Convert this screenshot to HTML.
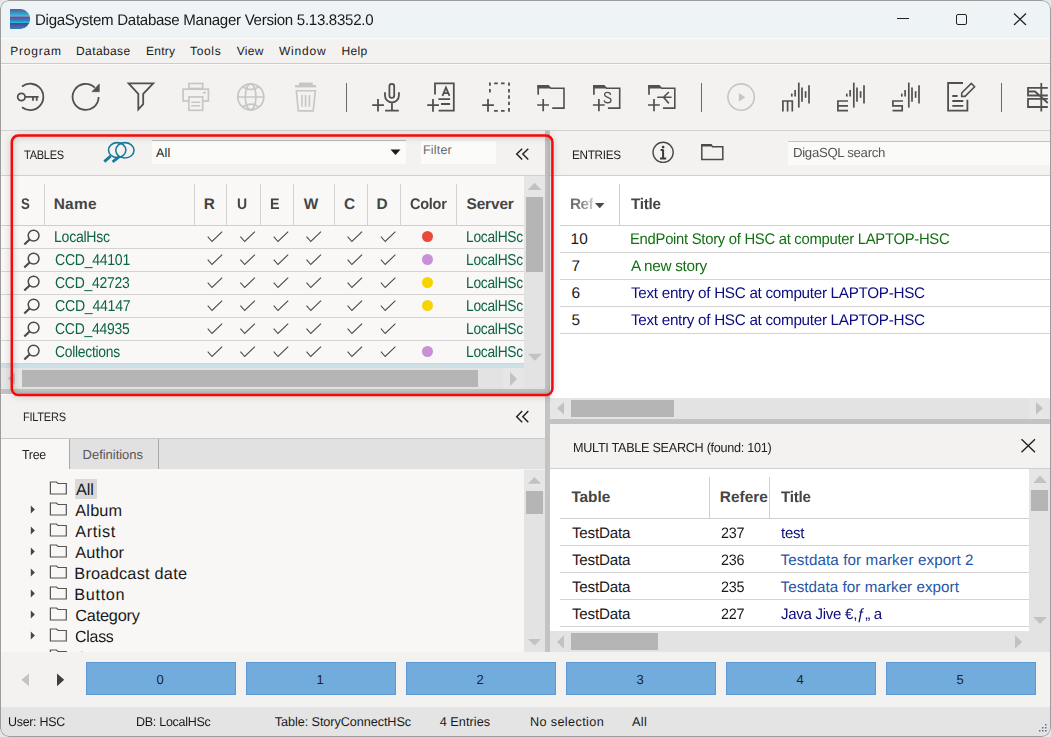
<!DOCTYPE html>
<html><head><meta charset="utf-8"><style>
html,body{margin:0;padding:0;}
body{width:1051px;height:737px;overflow:hidden;position:relative;background:#e4e6e8;font-family:"Liberation Sans", sans-serif;text-rendering:geometricPrecision;}
#win{position:absolute;left:0;top:0;width:1051px;height:737px;overflow:hidden;background:#f3f2f0;border-radius:9px;}
</style></head><body><div id="win">
<div style="position:absolute;left:0px;top:0px;width:1051px;height:38px;background:#eef3f6;"></div>
<div style="position:absolute;left:0px;top:38px;width:1051px;height:1px;background:#fbfbfa;"></div>
<svg style="position:absolute;left:10px;top:9px;" width="20" height="20" viewBox="10 9 20 20"><defs>
<linearGradient id="lb1" x1="0" y1="0" x2="0" y2="1"><stop offset="0" stop-color="#5a5a9c"/><stop offset="0.55" stop-color="#3c92c2"/><stop offset="1" stop-color="#1fd0e2"/></linearGradient>
<linearGradient id="lb2" x1="0" y1="0" x2="0" y2="1"><stop offset="0" stop-color="#5a4a96"/><stop offset="0.6" stop-color="#3880bc"/><stop offset="1" stop-color="#1ec8de"/></linearGradient>
<linearGradient id="lb3" x1="0" y1="0" x2="0" y2="1"><stop offset="0" stop-color="#5a3e8e"/><stop offset="1" stop-color="#2a86c2"/></linearGradient>
<clipPath id="dclip"><path d="M10,9 H20.5 A9.6,10 0 0 1 20.5,29 H10 Z"/></clipPath></defs>
<g clip-path="url(#dclip)"><rect x="10" y="9" width="20" height="7.4" fill="url(#lb1)"/><rect x="10" y="16.4" width="20" height="6.6" fill="url(#lb2)"/><rect x="10" y="23" width="20" height="6" fill="url(#lb3)"/></g></svg>
<div id="t_title" style="position:absolute;left:35.00px;top:12.86px;font-size:15.4px;line-height:15.4px;color:#1a1a1a;font-weight:normal;letter-spacing:-0.300px;white-space:nowrap;transform:scaleX(0.9797);transform-origin:0 0;">DigaSystem Database Manager Version 5.13.8352.0</div>
<div style="position:absolute;left:897px;top:18px;width:12px;height:1.2px;background:#222;"></div>
<div style="position:absolute;left:955.5px;top:13.5px;width:11px;height:11px;background:transparent;border:1.3px solid #222;border-radius:2px;box-sizing:border-box;"></div>
<svg style="position:absolute;left:1012px;top:12px;" width="16" height="16" viewBox="1012 12 16 16"><path d="M1014,13.5 L1026,25 M1026,13.5 L1014,25" stroke="#222" stroke-width="1.3"/></svg>
<div id="m_0" style="position:absolute;left:10.30px;top:45.43px;font-size:12px;line-height:12px;color:#1a1a1a;font-weight:normal;letter-spacing:0.764px;white-space:nowrap;">Program</div>
<div id="m_1" style="position:absolute;left:76.00px;top:45.43px;font-size:12px;line-height:12px;color:#1a1a1a;font-weight:normal;letter-spacing:0.401px;white-space:nowrap;">Database</div>
<div id="m_2" style="position:absolute;left:146.00px;top:45.43px;font-size:12px;line-height:12px;color:#1a1a1a;font-weight:normal;letter-spacing:0.248px;white-space:nowrap;">Entry</div>
<div id="m_3" style="position:absolute;left:190.00px;top:45.43px;font-size:12px;line-height:12px;color:#1a1a1a;font-weight:normal;letter-spacing:0.672px;white-space:nowrap;">Tools</div>
<div id="m_4" style="position:absolute;left:236.70px;top:45.43px;font-size:12px;line-height:12px;color:#1a1a1a;font-weight:normal;letter-spacing:0.291px;white-space:nowrap;">View</div>
<div id="m_5" style="position:absolute;left:279.00px;top:45.43px;font-size:12px;line-height:12px;color:#1a1a1a;font-weight:normal;letter-spacing:0.797px;white-space:nowrap;">Window</div>
<div id="m_6" style="position:absolute;left:341.40px;top:45.43px;font-size:12px;line-height:12px;color:#1a1a1a;font-weight:normal;letter-spacing:0.331px;white-space:nowrap;">Help</div>
<div style="position:absolute;left:0px;top:63px;width:1051px;height:1px;background:#cbcbcb;"></div>
<div style="position:absolute;left:0px;top:64px;width:1051px;height:1px;background:#fbfbfa;"></div>
<svg style="position:absolute;left:14px;top:78px;" width="34" height="36" viewBox="14 78 34 36"><path d="M22,86.5 A13.2,13.2 0 1 1 22,107.3" stroke="#505050" stroke-width="1.8" fill="none"/>
<circle cx="21.4" cy="97" r="3.7" stroke="#505050" stroke-width="1.8" fill="none"/><path d="M25.1,96.9 H38.6 M33,96.9 V100.7 M36.7,96.9 V100.7" stroke="#505050" stroke-width="1.8" fill="none"/></svg>
<svg style="position:absolute;left:68px;top:78px;" width="36" height="36" viewBox="68 78 36 36"><path d="M94.8,87.7 A13,13 0 1 0 98.6,96.9" stroke="#505050" stroke-width="1.8" fill="none"/>
<path d="M91.9,91.7 L99.3,83.9 L99.3,91.7 Z" fill="#505050" stroke="#505050" stroke-width="0.6"/></svg>
<svg style="position:absolute;left:124px;top:78px;" width="34" height="36" viewBox="124 78 34 36"><path d="M128.6,83.4 H153.2 L143.2,93.8 V104.2 L138.3,109.5 V93.8 Z" stroke="#505050" stroke-width="1.8" fill="none" stroke-linejoin="miter"/></svg>
<svg style="position:absolute;left:178px;top:78px;" width="36" height="36" viewBox="178 78 36 36"><rect x="188.9" y="83.5" width="13.8" height="5" stroke="#c6c6c6" stroke-width="1.7" fill="none"/>
<rect x="183.1" y="89.2" width="25.3" height="11.8" stroke="#c6c6c6" stroke-width="1.7" fill="none"/>
<rect x="188.9" y="96.9" width="13.8" height="13.4" fill="#f3f2f0" stroke="#c6c6c6" stroke-width="1.7" fill="none"/>
<path d="M191.2,102.2 H200.2 M191.2,105.8 H200.2 M202.7,92.6 H206" stroke="#c6c6c6" stroke-width="1.6" fill="none"/></svg>
<svg style="position:absolute;left:233px;top:78px;" width="36" height="36" viewBox="233 78 36 36"><circle cx="250.8" cy="96.9" r="13" stroke="#c6c6c6" stroke-width="1.7" fill="none"/><ellipse cx="250.6" cy="96.9" rx="5.3" ry="13" stroke="#c6c6c6" stroke-width="1.7" fill="none"/>
<path d="M237.8,97 H263.8 M242.5,86.8 Q250.6,92.2 258.6,86.8 M242.5,106.9 Q250.6,101.4 258.6,106.9" stroke="#c6c6c6" stroke-width="1.7" fill="none"/></svg>
<svg style="position:absolute;left:291px;top:78px;" width="30" height="36" viewBox="291 78 30 36"><rect x="299" y="82.6" width="13.7" height="3" fill="#c6c6c6"/><rect x="295" y="85.1" width="21.1" height="2.3" fill="#c6c6c6"/>
<path d="M296.3,90.8 H315.4 L313.2,110.9 H298.3 Z" stroke="#c6c6c6" stroke-width="1.6" fill="none"/><path d="M302,95 V106.8 M305.6,95 V106.8 M309.4,95 V106.8" stroke="#c6c6c6" stroke-width="1.6" fill="none"/></svg>
<div style="position:absolute;left:346px;top:83px;width:1.3px;height:28.5px;background:#6a6a6a;"></div>
<div style="position:absolute;left:701px;top:83px;width:1.3px;height:28.5px;background:#6a6a6a;"></div>
<div style="position:absolute;left:1001px;top:83px;width:1.3px;height:28.5px;background:#6a6a6a;"></div>
<svg style="position:absolute;left:368px;top:78px;" width="36" height="36" viewBox="368 78 36 36"><path d="M372.2,105.1 H383.9 M378,99 V111.5" stroke="#505050" stroke-width="1.8" fill="none"/>
<rect x="389.4" y="83.8" width="4.8" height="14.1" rx="2.4" stroke="#505050" stroke-width="1.8" fill="none"/>
<path d="M385,92.2 V95.5 A6.95,7 0 0 0 398.9,95.5 V92.2 M391.95,102.5 V110.5 M385.1,110.7 H398.8" stroke="#505050" stroke-width="1.8" fill="none"/></svg>
<svg style="position:absolute;left:423px;top:78px;" width="36" height="36" viewBox="423 78 36 36"><path d="M435,94.6 V83.3 H453.8 V110.7 H438.6" stroke="#505050" stroke-width="1.8" fill="none"/>
<path d="M427.2,105.1 H438.9 M433,99 V111.7" stroke="#505050" stroke-width="1.8" fill="none"/>
<path d="M438.4,99.2 H450.1 M441,104 H450.1" stroke="#505050" stroke-width="1.8" fill="none"/>
<path d="M442.5,95.9 L445.95,87.6 L449.5,95.9 M443.8,93 H448.2" stroke="#505050" stroke-width="1.75" fill="none"/></svg>
<svg style="position:absolute;left:478px;top:78px;" width="36" height="36" viewBox="478 78 36 36"><path d="M482.2,105.1 H493.9 M488,99 V111.7" stroke="#505050" stroke-width="1.8" fill="none"/>
<path d="M489.9,82.4 V85.8 M489.9,89 V92.4 M494.1,83.3 H497.8 M501,83.3 H504.6 M509,82.4 V85.8 M509,89 V92.4 M509,95.3 V98.8 M509,101.7 V105.1 M509,108 V111.7 M494.1,110.8 H497.8 M501,110.8 H504.6" stroke="#505050" stroke-width="1.8" fill="none"/></svg>
<svg style="position:absolute;left:533px;top:78px;" width="36" height="36" viewBox="533 78 36 36"><path d="M538.2,94.7 V85.5" stroke="#505050" stroke-width="1.7" fill="none"/>
<path d="M537.4000000000001,85 H548.7 L551.8000000000001,88.6 H537.4000000000001 Z" fill="#505050"/>
<path d="M550.2,88.3 H564.0 V108.1 H552.2" stroke="#505050" stroke-width="1.6" fill="none"/>
<path d="M537.2,105 H549.0 M543.2,99 V111.3" stroke="#505050" stroke-width="1.7" fill="none"/></svg>
<svg style="position:absolute;left:588px;top:78px;" width="36" height="36" viewBox="588 78 36 36"><path d="M593.9,94.7 V85.5" stroke="#505050" stroke-width="1.7" fill="none"/>
<path d="M593.1,85 H604.4 L607.5,88.6 H593.1 Z" fill="#505050"/>
<path d="M605.9,88.3 H619.6999999999999 V108.1 H607.9" stroke="#505050" stroke-width="1.6" fill="none"/>
<path d="M592.9,105 H604.6999999999999 M598.9,99 V111.3" stroke="#505050" stroke-width="1.7" fill="none"/><path d="M610.6,94.8 C610.2,91.6 604.6,91.4 604.6,94.6 C604.6,98.2 611,96.6 611,100.2 C611,103.6 604.6,103.6 604.1,100.3" stroke="#505050" stroke-width="1.3" fill="none"/></svg>
<svg style="position:absolute;left:644px;top:78px;" width="36" height="36" viewBox="644 78 36 36"><path d="M649,94.7 V85.5" stroke="#505050" stroke-width="1.7" fill="none"/>
<path d="M648.2,85 H659.5 L662.6,88.6 H648.2 Z" fill="#505050"/>
<path d="M661,88.3 H674.8 V108.1 H663" stroke="#505050" stroke-width="1.6" fill="none"/>
<path d="M648,105 H659.8 M654,99 V111.3" stroke="#505050" stroke-width="1.7" fill="none"/><path d="M657.2,97.3 H671.6 M668.9,92 L663.5,97.3 L668.9,103.4" stroke="#505050" stroke-width="1.6" fill="none"/></svg>
<svg style="position:absolute;left:723px;top:78px;" width="36" height="36" viewBox="723 78 36 36"><circle cx="741.1" cy="97.05" r="13.2" stroke="#c6c6c6" stroke-width="1.6" fill="none"/><path d="M738.9,92.9 V101.7 L745.3,97.3 Z" fill="#c6c6c6"/></svg>
<svg style="position:absolute;left:778px;top:78px;" width="36" height="36" viewBox="778 78 36 36"><path d="M791.8,93.6 V96.6" stroke="#505050" stroke-width="1.7" fill="none"/><path d="M795.1,90 V96.6" stroke="#505050" stroke-width="1.7" fill="none"/><path d="M798.8,82.6 V107.6" stroke="#505050" stroke-width="1.7" fill="none"/><path d="M802,87.5 V101.7" stroke="#505050" stroke-width="1.7" fill="none"/><path d="M805.6,91.2 V97.8" stroke="#505050" stroke-width="1.7" fill="none"/><path d="M809,85.2 V103.6" stroke="#505050" stroke-width="1.7" fill="none"/><path d="M782.9,111.5 V101 H792.3 V111.5 M787.6,101 V111.5" stroke="#505050" stroke-width="1.7" fill="none"/></svg>
<svg style="position:absolute;left:833px;top:78px;" width="36" height="36" viewBox="833 78 36 36"><path d="M846.8,93.6 V96.6" stroke="#505050" stroke-width="1.7" fill="none"/><path d="M850.1,90 V96.6" stroke="#505050" stroke-width="1.7" fill="none"/><path d="M853.8,82.6 V107.6" stroke="#505050" stroke-width="1.7" fill="none"/><path d="M857,87.5 V101.7" stroke="#505050" stroke-width="1.7" fill="none"/><path d="M860.6,91.2 V97.8" stroke="#505050" stroke-width="1.7" fill="none"/><path d="M864,85.2 V103.6" stroke="#505050" stroke-width="1.7" fill="none"/><path d="M848,101 H837.9 V110.6 H848 M837.9,105.8 H848" stroke="#505050" stroke-width="1.7" fill="none"/></svg>
<svg style="position:absolute;left:888px;top:78px;" width="36" height="36" viewBox="888 78 36 36"><path d="M901.8,93.6 V96.6" stroke="#505050" stroke-width="1.7" fill="none"/><path d="M905.1,90 V96.6" stroke="#505050" stroke-width="1.7" fill="none"/><path d="M908.8,82.6 V107.6" stroke="#505050" stroke-width="1.7" fill="none"/><path d="M912,87.5 V101.7" stroke="#505050" stroke-width="1.7" fill="none"/><path d="M915.6,91.2 V97.8" stroke="#505050" stroke-width="1.7" fill="none"/><path d="M919,85.2 V103.6" stroke="#505050" stroke-width="1.7" fill="none"/><path d="M903,101 H892.9 V105.8 H902.2 V110.6 H892.5" stroke="#505050" stroke-width="1.7" fill="none"/></svg>
<svg style="position:absolute;left:943px;top:78px;" width="36" height="36" viewBox="943 78 36 36"><path d="M963,83 H948.1 V110.7 H967.4 V99.7" stroke="#505050" stroke-width="1.8" fill="none"/>
<path d="M952.3,96 H957.6 M952.3,101 H963.3 M952.3,105.8 H963.3" stroke="#505050" stroke-width="1.8" fill="none"/>
<path d="M961.7,96.4 V93 L971.3,83.4 L974.6,86.8 L965,96.4 Z" stroke="#505050" stroke-width="1.6" fill="none"/></svg>
<svg style="position:absolute;left:1024px;top:78px;" width="26" height="36" viewBox="1024 78 26 36"><path d="M1047.8,87.8 H1028 V95.5 H1047.8 M1047.8,98.9 H1028 V107 H1047.8 M1041.3,83 V111.4 M1028,91.5 H1035 L1047.8,103" stroke="#505050" stroke-width="1.8" fill="none"/></svg>
<div style="position:absolute;left:0px;top:130px;width:1051px;height:1px;background:#d2d2d2;"></div>
<div style="position:absolute;left:0px;top:131px;width:545px;height:44px;background:#f3f2f0;"></div>
<div style="position:absolute;left:0px;top:175px;width:545px;height:1px;background:#d0d0d0;"></div>
<div id="tb_hdr" style="position:absolute;left:24.30px;top:148.51px;font-size:12.2px;line-height:12.2px;color:#222;font-weight:normal;letter-spacing:-0.300px;white-space:nowrap;transform:scaleX(0.9049);transform-origin:0 0;">TABLES</div>
<svg style="position:absolute;left:100px;top:138px;" width="40" height="28" viewBox="100 138 40 28"><ellipse cx="117.2" cy="150.1" rx="8.7" ry="7.5" stroke="#1a7a99" stroke-width="1.6" fill="none"/>
<ellipse cx="124.9" cy="150.3" rx="9.1" ry="7.7" stroke="#1a7a99" stroke-width="1.6" fill="none"/>
<path d="M104.3,161.6 L110.6,156.2 M112.6,161.8 L119.3,156.6" stroke="#1a7a99" stroke-width="2.9" stroke-linecap="butt"/></svg>
<div style="position:absolute;left:152px;top:140px;width:254px;height:24px;background:#fbfbfa;border-top:1px solid #bdbdbd;box-sizing:border-box;"></div>
<div id="tb_all" style="position:absolute;left:156.00px;top:147.37px;font-size:12.5px;line-height:12.5px;color:#1a1a1a;font-weight:normal;letter-spacing:0.193px;white-space:nowrap;">All</div>
<svg style="position:absolute;left:388px;top:146px;" width="16" height="12" viewBox="388 146 16 12"><path d="M390.5,149.6 H400.5 L395.5,155 Z" fill="#1a1a1a"/></svg>
<div style="position:absolute;left:421px;top:141px;width:75px;height:23px;background:#fbfbfa;"></div>
<div id="tb_filter" style="position:absolute;left:423.00px;top:144.37px;font-size:12.5px;line-height:12.5px;color:#6a6a6a;font-weight:normal;letter-spacing:0.197px;white-space:nowrap;">Filter</div>
<svg style="position:absolute;left:512px;top:144px;" width="20" height="18" viewBox="512 144 20 18"><path d="M522.2,148.7 L516.7,154.1 L522.2,159.5 M528.3,148.7 L522.8,154.1 L528.3,159.5" stroke="#222" stroke-width="1.45" fill="none"/></svg>
<div style="position:absolute;left:0px;top:176px;width:525px;height:192px;background:#f9f8f7;"></div>
<div style="position:absolute;left:0px;top:225px;width:525px;height:1px;background:#cfcfcf;"></div>
<div style="position:absolute;left:44px;top:184px;width:1px;height:41px;background:#d3d3d3;"></div>
<div style="position:absolute;left:194px;top:184px;width:1px;height:41px;background:#d3d3d3;"></div>
<div style="position:absolute;left:226px;top:184px;width:1px;height:41px;background:#d3d3d3;"></div>
<div style="position:absolute;left:260px;top:184px;width:1px;height:41px;background:#d3d3d3;"></div>
<div style="position:absolute;left:293px;top:184px;width:1px;height:41px;background:#d3d3d3;"></div>
<div style="position:absolute;left:334px;top:184px;width:1px;height:41px;background:#d3d3d3;"></div>
<div style="position:absolute;left:367px;top:184px;width:1px;height:41px;background:#d3d3d3;"></div>
<div style="position:absolute;left:400px;top:184px;width:1px;height:41px;background:#d3d3d3;"></div>
<div style="position:absolute;left:456px;top:184px;width:1px;height:41px;background:#d3d3d3;"></div>
<div id="th_0" style="position:absolute;left:21.40px;top:196.86px;font-size:15.4px;line-height:15.4px;color:#454545;font-weight:bold;letter-spacing:-0.300px;white-space:nowrap;transform:scaleX(0.8600);transform-origin:0 0;">S</div>
<div id="th_1" style="position:absolute;left:53.70px;top:196.86px;font-size:15.4px;line-height:15.4px;color:#454545;font-weight:bold;letter-spacing:0.314px;white-space:nowrap;">Name</div>
<div id="th_2" style="position:absolute;left:203.80px;top:196.86px;font-size:15.4px;line-height:15.4px;color:#454545;font-weight:bold;letter-spacing:-0.100px;white-space:nowrap;">R</div>
<div id="th_3" style="position:absolute;left:237.00px;top:196.86px;font-size:15.4px;line-height:15.4px;color:#454545;font-weight:bold;letter-spacing:-0.300px;white-space:nowrap;transform:scaleX(0.9091);transform-origin:0 0;">U</div>
<div id="th_4" style="position:absolute;left:270.00px;top:196.86px;font-size:15.4px;line-height:15.4px;color:#454545;font-weight:bold;letter-spacing:-0.300px;white-space:nowrap;transform:scaleX(0.9333);transform-origin:0 0;">E</div>
<div id="th_5" style="position:absolute;left:303.80px;top:196.86px;font-size:15.4px;line-height:15.4px;color:#454545;font-weight:bold;letter-spacing:0.200px;white-space:nowrap;">W</div>
<div id="th_6" style="position:absolute;left:344.00px;top:196.86px;font-size:15.4px;line-height:15.4px;color:#454545;font-weight:bold;letter-spacing:0.000px;white-space:nowrap;">C</div>
<div id="th_7" style="position:absolute;left:376.40px;top:196.86px;font-size:15.4px;line-height:15.4px;color:#454545;font-weight:bold;letter-spacing:0.600px;white-space:nowrap;">D</div>
<div id="th_8" style="position:absolute;left:410.40px;top:196.86px;font-size:15.4px;line-height:15.4px;color:#454545;font-weight:bold;letter-spacing:-0.300px;white-space:nowrap;transform:scaleX(0.9438);transform-origin:0 0;">Color</div>
<div id="th_9" style="position:absolute;left:466.60px;top:196.86px;font-size:15.4px;line-height:15.4px;color:#454545;font-weight:bold;letter-spacing:-0.147px;white-space:nowrap;">Server</div>
<div style="position:absolute;left:0px;top:248px;width:525px;height:1px;background:#d3d3d3;"></div>
<div id="tr_0" style="position:absolute;left:53.70px;top:229.91px;font-size:15.7px;line-height:15.7px;color:#0b6446;font-weight:normal;letter-spacing:-0.300px;white-space:nowrap;transform:scaleX(0.8981);transform-origin:0 0;">LocalHsc</div>
<div id="ts_0" style="position:absolute;left:465.60px;top:229.91px;font-size:15.7px;line-height:15.7px;color:#0b6446;font-weight:normal;letter-spacing:-0.300px;white-space:nowrap;transform:scaleX(0.8786);transform-origin:0 0;">LocalHSc</div>
<svg style="position:absolute;left:20px;top:227px;" width="24" height="20" viewBox="20 227 24 20"><circle cx="33.6" cy="235.6" r="5.4" stroke="#4a4a4a" stroke-width="1.5" fill="none"/><path d="M24.3,244.5 L29.6,239.5" stroke="#4a4a4a" stroke-width="2.2"/></svg>
<svg style="position:absolute;left:200px;top:225px;" width="200" height="23" viewBox="200 225 200 23"><path d="M207.7,236.7 L212.0,241.5 L222.2,231.7" stroke="#4a4a4a" stroke-width="1.1" fill="none"/><path d="M240.4,236.7 L244.70000000000002,241.5 L254.9,231.7" stroke="#4a4a4a" stroke-width="1.1" fill="none"/><path d="M273.7,236.7 L278.0,241.5 L288.2,231.7" stroke="#4a4a4a" stroke-width="1.1" fill="none"/><path d="M306.5,236.7 L310.8,241.5 L321.0,231.7" stroke="#4a4a4a" stroke-width="1.1" fill="none"/><path d="M347.6,236.7 L351.90000000000003,241.5 L362.1,231.7" stroke="#4a4a4a" stroke-width="1.1" fill="none"/><path d="M380.9,236.7 L385.2,241.5 L395.4,231.7" stroke="#4a4a4a" stroke-width="1.1" fill="none"/></svg>
<div style="position:absolute;left:422.0px;top:231.0px;width:11px;height:11px;border-radius:50%;background:#e84a3a"></div>
<div style="position:absolute;left:0px;top:271px;width:525px;height:1px;background:#d3d3d3;"></div>
<div id="tr_1" style="position:absolute;left:54.70px;top:252.91px;font-size:15.7px;line-height:15.7px;color:#0b6446;font-weight:normal;letter-spacing:-0.300px;white-space:nowrap;transform:scaleX(0.8965);transform-origin:0 0;">CCD_44101</div>
<div id="ts_1" style="position:absolute;left:465.60px;top:252.91px;font-size:15.7px;line-height:15.7px;color:#0b6446;font-weight:normal;letter-spacing:-0.300px;white-space:nowrap;transform:scaleX(0.8786);transform-origin:0 0;">LocalHSc</div>
<svg style="position:absolute;left:20px;top:250px;" width="24" height="20" viewBox="20 250 24 20"><circle cx="33.6" cy="258.6" r="5.4" stroke="#4a4a4a" stroke-width="1.5" fill="none"/><path d="M24.3,267.5 L29.6,262.5" stroke="#4a4a4a" stroke-width="2.2"/></svg>
<svg style="position:absolute;left:200px;top:248px;" width="200" height="23" viewBox="200 248 200 23"><path d="M207.7,259.7 L212.0,264.5 L222.2,254.7" stroke="#4a4a4a" stroke-width="1.1" fill="none"/><path d="M240.4,259.7 L244.70000000000002,264.5 L254.9,254.7" stroke="#4a4a4a" stroke-width="1.1" fill="none"/><path d="M273.7,259.7 L278.0,264.5 L288.2,254.7" stroke="#4a4a4a" stroke-width="1.1" fill="none"/><path d="M306.5,259.7 L310.8,264.5 L321.0,254.7" stroke="#4a4a4a" stroke-width="1.1" fill="none"/><path d="M347.6,259.7 L351.90000000000003,264.5 L362.1,254.7" stroke="#4a4a4a" stroke-width="1.1" fill="none"/><path d="M380.9,259.7 L385.2,264.5 L395.4,254.7" stroke="#4a4a4a" stroke-width="1.1" fill="none"/></svg>
<div style="position:absolute;left:422.0px;top:254.0px;width:11px;height:11px;border-radius:50%;background:#c990d8"></div>
<div style="position:absolute;left:0px;top:294px;width:525px;height:1px;background:#d3d3d3;"></div>
<div id="tr_2" style="position:absolute;left:54.70px;top:275.91px;font-size:15.7px;line-height:15.7px;color:#0b6446;font-weight:normal;letter-spacing:-0.300px;white-space:nowrap;transform:scaleX(0.8906);transform-origin:0 0;">CCD_42723</div>
<div id="ts_2" style="position:absolute;left:465.60px;top:275.91px;font-size:15.7px;line-height:15.7px;color:#0b6446;font-weight:normal;letter-spacing:-0.300px;white-space:nowrap;transform:scaleX(0.8786);transform-origin:0 0;">LocalHSc</div>
<svg style="position:absolute;left:20px;top:273px;" width="24" height="20" viewBox="20 273 24 20"><circle cx="33.6" cy="281.6" r="5.4" stroke="#4a4a4a" stroke-width="1.5" fill="none"/><path d="M24.3,290.5 L29.6,285.5" stroke="#4a4a4a" stroke-width="2.2"/></svg>
<svg style="position:absolute;left:200px;top:271px;" width="200" height="23" viewBox="200 271 200 23"><path d="M207.7,282.7 L212.0,287.5 L222.2,277.7" stroke="#4a4a4a" stroke-width="1.1" fill="none"/><path d="M240.4,282.7 L244.70000000000002,287.5 L254.9,277.7" stroke="#4a4a4a" stroke-width="1.1" fill="none"/><path d="M273.7,282.7 L278.0,287.5 L288.2,277.7" stroke="#4a4a4a" stroke-width="1.1" fill="none"/><path d="M306.5,282.7 L310.8,287.5 L321.0,277.7" stroke="#4a4a4a" stroke-width="1.1" fill="none"/><path d="M347.6,282.7 L351.90000000000003,287.5 L362.1,277.7" stroke="#4a4a4a" stroke-width="1.1" fill="none"/><path d="M380.9,282.7 L385.2,287.5 L395.4,277.7" stroke="#4a4a4a" stroke-width="1.1" fill="none"/></svg>
<div style="position:absolute;left:422.0px;top:277.0px;width:11px;height:11px;border-radius:50%;background:#f5d400"></div>
<div style="position:absolute;left:0px;top:317px;width:525px;height:1px;background:#d3d3d3;"></div>
<div id="tr_3" style="position:absolute;left:54.70px;top:298.91px;font-size:15.7px;line-height:15.7px;color:#0b6446;font-weight:normal;letter-spacing:-0.300px;white-space:nowrap;transform:scaleX(0.9013);transform-origin:0 0;">CCD_44147</div>
<div id="ts_3" style="position:absolute;left:465.60px;top:298.91px;font-size:15.7px;line-height:15.7px;color:#0b6446;font-weight:normal;letter-spacing:-0.300px;white-space:nowrap;transform:scaleX(0.8786);transform-origin:0 0;">LocalHSc</div>
<svg style="position:absolute;left:20px;top:296px;" width="24" height="20" viewBox="20 296 24 20"><circle cx="33.6" cy="304.6" r="5.4" stroke="#4a4a4a" stroke-width="1.5" fill="none"/><path d="M24.3,313.5 L29.6,308.5" stroke="#4a4a4a" stroke-width="2.2"/></svg>
<svg style="position:absolute;left:200px;top:294px;" width="200" height="23" viewBox="200 294 200 23"><path d="M207.7,305.7 L212.0,310.5 L222.2,300.7" stroke="#4a4a4a" stroke-width="1.1" fill="none"/><path d="M240.4,305.7 L244.70000000000002,310.5 L254.9,300.7" stroke="#4a4a4a" stroke-width="1.1" fill="none"/><path d="M273.7,305.7 L278.0,310.5 L288.2,300.7" stroke="#4a4a4a" stroke-width="1.1" fill="none"/><path d="M306.5,305.7 L310.8,310.5 L321.0,300.7" stroke="#4a4a4a" stroke-width="1.1" fill="none"/><path d="M347.6,305.7 L351.90000000000003,310.5 L362.1,300.7" stroke="#4a4a4a" stroke-width="1.1" fill="none"/><path d="M380.9,305.7 L385.2,310.5 L395.4,300.7" stroke="#4a4a4a" stroke-width="1.1" fill="none"/></svg>
<div style="position:absolute;left:422.0px;top:300.0px;width:11px;height:11px;border-radius:50%;background:#f5d400"></div>
<div style="position:absolute;left:0px;top:340px;width:525px;height:1px;background:#d3d3d3;"></div>
<div id="tr_4" style="position:absolute;left:54.70px;top:321.91px;font-size:15.7px;line-height:15.7px;color:#0b6446;font-weight:normal;letter-spacing:-0.300px;white-space:nowrap;transform:scaleX(0.8906);transform-origin:0 0;">CCD_44935</div>
<div id="ts_4" style="position:absolute;left:465.60px;top:321.91px;font-size:15.7px;line-height:15.7px;color:#0b6446;font-weight:normal;letter-spacing:-0.300px;white-space:nowrap;transform:scaleX(0.8786);transform-origin:0 0;">LocalHSc</div>
<svg style="position:absolute;left:20px;top:319px;" width="24" height="20" viewBox="20 319 24 20"><circle cx="33.6" cy="327.6" r="5.4" stroke="#4a4a4a" stroke-width="1.5" fill="none"/><path d="M24.3,336.5 L29.6,331.5" stroke="#4a4a4a" stroke-width="2.2"/></svg>
<svg style="position:absolute;left:200px;top:317px;" width="200" height="23" viewBox="200 317 200 23"><path d="M207.7,328.7 L212.0,333.5 L222.2,323.7" stroke="#4a4a4a" stroke-width="1.1" fill="none"/><path d="M240.4,328.7 L244.70000000000002,333.5 L254.9,323.7" stroke="#4a4a4a" stroke-width="1.1" fill="none"/><path d="M273.7,328.7 L278.0,333.5 L288.2,323.7" stroke="#4a4a4a" stroke-width="1.1" fill="none"/><path d="M306.5,328.7 L310.8,333.5 L321.0,323.7" stroke="#4a4a4a" stroke-width="1.1" fill="none"/><path d="M347.6,328.7 L351.90000000000003,333.5 L362.1,323.7" stroke="#4a4a4a" stroke-width="1.1" fill="none"/><path d="M380.9,328.7 L385.2,333.5 L395.4,323.7" stroke="#4a4a4a" stroke-width="1.1" fill="none"/></svg>
<div style="position:absolute;left:0px;top:363px;width:525px;height:1px;background:#d3d3d3;"></div>
<div id="tr_5" style="position:absolute;left:54.70px;top:344.91px;font-size:15.7px;line-height:15.7px;color:#0b6446;font-weight:normal;letter-spacing:-0.300px;white-space:nowrap;transform:scaleX(0.8838);transform-origin:0 0;">Collections</div>
<div id="ts_5" style="position:absolute;left:465.60px;top:344.91px;font-size:15.7px;line-height:15.7px;color:#0b6446;font-weight:normal;letter-spacing:-0.300px;white-space:nowrap;transform:scaleX(0.8786);transform-origin:0 0;">LocalHSc</div>
<svg style="position:absolute;left:20px;top:342px;" width="24" height="20" viewBox="20 342 24 20"><circle cx="33.6" cy="350.6" r="5.4" stroke="#4a4a4a" stroke-width="1.5" fill="none"/><path d="M24.3,359.5 L29.6,354.5" stroke="#4a4a4a" stroke-width="2.2"/></svg>
<svg style="position:absolute;left:200px;top:340px;" width="200" height="23" viewBox="200 340 200 23"><path d="M207.7,351.7 L212.0,356.5 L222.2,346.7" stroke="#4a4a4a" stroke-width="1.1" fill="none"/><path d="M240.4,351.7 L244.70000000000002,356.5 L254.9,346.7" stroke="#4a4a4a" stroke-width="1.1" fill="none"/><path d="M273.7,351.7 L278.0,356.5 L288.2,346.7" stroke="#4a4a4a" stroke-width="1.1" fill="none"/><path d="M306.5,351.7 L310.8,356.5 L321.0,346.7" stroke="#4a4a4a" stroke-width="1.1" fill="none"/><path d="M347.6,351.7 L351.90000000000003,356.5 L362.1,346.7" stroke="#4a4a4a" stroke-width="1.1" fill="none"/><path d="M380.9,351.7 L385.2,356.5 L395.4,346.7" stroke="#4a4a4a" stroke-width="1.1" fill="none"/></svg>
<div style="position:absolute;left:422.0px;top:346.0px;width:11px;height:11px;border-radius:50%;background:#c990d8"></div>
<div style="position:absolute;left:0px;top:364px;width:525px;height:4px;background:#cde0e6;"></div>
<div style="position:absolute;left:524px;top:176px;width:21px;height:192px;background:#e3e3e3;"></div>
<div style="position:absolute;left:524px;top:176px;width:21px;height:21px;background:#e6e6e6;"></div>
<svg style="position:absolute;left:524px;top:176px;" width="21" height="192" viewBox="524 176 21 192"><path d="M527.7,190.1 H541.5 L534.6,182.7 Z M528,353.8 H541.8 L534.9,360.7 Z" fill="#c2c2c2"/></svg>
<div style="position:absolute;left:526px;top:197px;width:17px;height:75px;background:#b5b5b5;"></div>
<div style="position:absolute;left:0px;top:368px;width:545px;height:21px;background:#e3e3e3;"></div>
<div style="position:absolute;left:22px;top:370px;width:456px;height:17px;background:#b5b5b5;"></div>
<div style="position:absolute;left:0px;top:368px;width:22px;height:21px;background:#e6e6e6;"></div>
<div style="position:absolute;left:503px;top:368px;width:21px;height:21px;background:#e6e6e6;"></div>
<svg style="position:absolute;left:0px;top:368px;" width="545" height="21" viewBox="0 368 545 21"><path d="M510,372 V386 L517,379 Z M14.8,372.2 V384.8 L8,378.5 Z" fill="#c2c2c2"/></svg>
<div style="position:absolute;left:0px;top:389px;width:545px;height:4.6px;background:#c4c4c4;"></div>
<div style="position:absolute;left:0px;top:393.6px;width:545px;height:1.4px;background:#fafafa;"></div>
<div style="position:absolute;left:545px;top:130px;width:5px;height:522px;background:#c3c3c3;"></div>
<div style="position:absolute;left:0px;top:396px;width:545px;height:42px;background:#f3f2f0;"></div>
<div id="f_hdr" style="position:absolute;left:23.30px;top:411.21px;font-size:12.2px;line-height:12.2px;color:#222;font-weight:normal;letter-spacing:-0.300px;white-space:nowrap;transform:scaleX(0.9076);transform-origin:0 0;">FILTERS</div>
<svg style="position:absolute;left:512px;top:408px;" width="20" height="18" viewBox="512 408 20 18"><path d="M522.2,411 L516.7,416.7 L522.2,422.3 M528.3,411 L522.8,416.7 L528.3,422.3" stroke="#222" stroke-width="1.45" fill="none"/></svg>
<div style="position:absolute;left:0px;top:438px;width:545px;height:1px;background:#c9c9c9;"></div>
<div style="position:absolute;left:0px;top:439px;width:545px;height:30px;background:#e1e1e1;"></div>
<div style="position:absolute;left:0px;top:439px;width:69px;height:30px;background:#f8f7f6;"></div>
<div style="position:absolute;left:69px;top:439px;width:1px;height:30px;background:#a8a8a8;"></div>
<div style="position:absolute;left:158px;top:439px;width:1px;height:30px;background:#a8a8a8;"></div>
<div id="f_tree" style="position:absolute;left:22.30px;top:448.15px;font-size:13px;line-height:13px;color:#222;font-weight:normal;letter-spacing:-0.300px;white-space:nowrap;transform:scaleX(0.9515);transform-origin:0 0;">Tree</div>
<div id="f_defs" style="position:absolute;left:82.60px;top:448.15px;font-size:13px;line-height:13px;color:#555;font-weight:normal;letter-spacing:-0.030px;white-space:nowrap;">Definitions</div>
<div style="position:absolute;left:0px;top:469px;width:525px;height:183px;background:#f8f7f6;"></div>
<div style="position:absolute;left:75px;top:479px;width:22px;height:20px;background:#d9d9d9;"></div>
<div id="tree_0" style="position:absolute;left:75.90px;top:482.01px;font-size:16.3px;line-height:16.3px;color:#1a1a1a;font-weight:normal;letter-spacing:-0.038px;white-space:nowrap;">All</div>
<svg style="position:absolute;left:48px;top:479px;" width="22" height="18" viewBox="48 479 22 18"><path d="M50.4,494 V482 H56.5 L58,483.5 H66.3 V494 Z" stroke="#555" stroke-width="1.2" fill="none"/></svg>
<div id="tree_1" style="position:absolute;left:75.30px;top:503.01px;font-size:16.3px;line-height:16.3px;color:#1a1a1a;font-weight:normal;letter-spacing:0.178px;white-space:nowrap;">Album</div>
<svg style="position:absolute;left:48px;top:500px;" width="22" height="18" viewBox="48 500 22 18"><path d="M50.4,515 V503 H56.5 L58,504.5 H66.3 V515 Z" stroke="#555" stroke-width="1.2" fill="none"/></svg>
<svg style="position:absolute;left:28px;top:504px;" width="10" height="12" viewBox="28 504 10 12"><path d="M30.8,505.5 V513.5 L34.8,509.5 Z" fill="#444"/></svg>
<div id="tree_2" style="position:absolute;left:75.30px;top:524.01px;font-size:16.3px;line-height:16.3px;color:#1a1a1a;font-weight:normal;letter-spacing:0.588px;white-space:nowrap;">Artist</div>
<svg style="position:absolute;left:48px;top:521px;" width="22" height="18" viewBox="48 521 22 18"><path d="M50.4,536 V524 H56.5 L58,525.5 H66.3 V536 Z" stroke="#555" stroke-width="1.2" fill="none"/></svg>
<svg style="position:absolute;left:28px;top:525px;" width="10" height="12" viewBox="28 525 10 12"><path d="M30.8,526.5 V534.5 L34.8,530.5 Z" fill="#444"/></svg>
<div id="tree_3" style="position:absolute;left:75.30px;top:545.01px;font-size:16.3px;line-height:16.3px;color:#1a1a1a;font-weight:normal;letter-spacing:0.151px;white-space:nowrap;">Author</div>
<svg style="position:absolute;left:48px;top:542px;" width="22" height="18" viewBox="48 542 22 18"><path d="M50.4,557 V545 H56.5 L58,546.5 H66.3 V557 Z" stroke="#555" stroke-width="1.2" fill="none"/></svg>
<svg style="position:absolute;left:28px;top:546px;" width="10" height="12" viewBox="28 546 10 12"><path d="M30.8,547.5 V555.5 L34.8,551.5 Z" fill="#444"/></svg>
<div id="tree_4" style="position:absolute;left:74.30px;top:566.01px;font-size:16.3px;line-height:16.3px;color:#1a1a1a;font-weight:normal;letter-spacing:0.241px;white-space:nowrap;">Broadcast date</div>
<svg style="position:absolute;left:48px;top:563px;" width="22" height="18" viewBox="48 563 22 18"><path d="M50.4,578 V566 H56.5 L58,567.5 H66.3 V578 Z" stroke="#555" stroke-width="1.2" fill="none"/></svg>
<svg style="position:absolute;left:28px;top:567px;" width="10" height="12" viewBox="28 567 10 12"><path d="M30.8,568.5 V576.5 L34.8,572.5 Z" fill="#444"/></svg>
<div id="tree_5" style="position:absolute;left:74.30px;top:587.01px;font-size:16.3px;line-height:16.3px;color:#1a1a1a;font-weight:normal;letter-spacing:0.637px;white-space:nowrap;">Button</div>
<svg style="position:absolute;left:48px;top:584px;" width="22" height="18" viewBox="48 584 22 18"><path d="M50.4,599 V587 H56.5 L58,588.5 H66.3 V599 Z" stroke="#555" stroke-width="1.2" fill="none"/></svg>
<svg style="position:absolute;left:28px;top:588px;" width="10" height="12" viewBox="28 588 10 12"><path d="M30.8,589.5 V597.5 L34.8,593.5 Z" fill="#444"/></svg>
<div id="tree_6" style="position:absolute;left:75.30px;top:608.01px;font-size:16.3px;line-height:16.3px;color:#1a1a1a;font-weight:normal;letter-spacing:-0.217px;white-space:nowrap;">Category</div>
<svg style="position:absolute;left:48px;top:605px;" width="22" height="18" viewBox="48 605 22 18"><path d="M50.4,620 V608 H56.5 L58,609.5 H66.3 V620 Z" stroke="#555" stroke-width="1.2" fill="none"/></svg>
<svg style="position:absolute;left:28px;top:609px;" width="10" height="12" viewBox="28 609 10 12"><path d="M30.8,610.5 V618.5 L34.8,614.5 Z" fill="#444"/></svg>
<div id="tree_7" style="position:absolute;left:75.30px;top:629.01px;font-size:16.3px;line-height:16.3px;color:#1a1a1a;font-weight:normal;letter-spacing:-0.300px;white-space:nowrap;transform:scaleX(0.9830);transform-origin:0 0;">Class</div>
<svg style="position:absolute;left:48px;top:626px;" width="22" height="18" viewBox="48 626 22 18"><path d="M50.4,641 V629 H56.5 L58,630.5 H66.3 V641 Z" stroke="#555" stroke-width="1.2" fill="none"/></svg>
<svg style="position:absolute;left:28px;top:630px;" width="10" height="12" viewBox="28 630 10 12"><path d="M30.8,631.5 V639.5 L34.8,635.5 Z" fill="#444"/></svg>
<div id="tree_8" style="position:absolute;left:75.30px;top:650.01px;font-size:16.3px;line-height:16.3px;color:#1a1a1a;font-weight:normal;letter-spacing:0.000px;white-space:nowrap;">Co</div>
<svg style="position:absolute;left:48px;top:647px;" width="22" height="18" viewBox="48 647 22 18"><path d="M50.4,662 V650 H56.5 L58,651.5 H66.3 V662 Z" stroke="#555" stroke-width="1.2" fill="none"/></svg>
<svg style="position:absolute;left:28px;top:651px;" width="10" height="12" viewBox="28 651 10 12"><path d="M30.8,652.5 V660.5 L34.8,656.5 Z" fill="#444"/></svg>
<div style="position:absolute;left:524px;top:470px;width:21px;height:182px;background:#e3e3e3;"></div>
<div style="position:absolute;left:524px;top:470px;width:21px;height:20.6px;background:#e6e6e6;"></div>
<svg style="position:absolute;left:524px;top:470px;" width="21" height="182" viewBox="524 470 21 182"><path d="M528,483.7 H541 L534.5,477 Z M528,639 H541 L534.5,645.6 Z" fill="#c2c2c2"/></svg>
<div style="position:absolute;left:526px;top:490.6px;width:17px;height:23.6px;background:#b5b5b5;"></div>
<div style="position:absolute;left:550px;top:131px;width:501px;height:44px;background:#f3f2f0;"></div>
<div style="position:absolute;left:550px;top:175px;width:501px;height:1px;background:#d0d0d0;"></div>
<div id="e_hdr" style="position:absolute;left:572.30px;top:148.61px;font-size:12.2px;line-height:12.2px;color:#222;font-weight:normal;letter-spacing:-0.300px;white-space:nowrap;transform:scaleX(0.9621);transform-origin:0 0;">ENTRIES</div>
<svg style="position:absolute;left:650px;top:139px;" width="28" height="28" viewBox="650 139 28 28"><circle cx="663.1" cy="152.3" r="10.1" stroke="#4a4a4a" stroke-width="1.4" fill="none"/>
<circle cx="663.1" cy="147.1" r="1.4" fill="#3a3a3a"/><path d="M663.1,149.4 V158.6 M660.6,150 H663.1 M660,158.6 H666.2" stroke="#3a3a3a" stroke-width="2" fill="none"/></svg>
<svg style="position:absolute;left:698px;top:140px;" width="30" height="24" viewBox="698 140 30 24"><path d="M701.8,159.4 V144.8 H711 L712.6,146.8 H722.8 V159.4 Z" stroke="#4a4a4a" stroke-width="1.5" fill="none"/>
<rect x="701.5" y="144" width="10" height="2.5" fill="#4a4a4a"/></svg>
<div style="position:absolute;left:788px;top:141px;width:263px;height:23.5px;background:#fafaf9;border-top:1px solid #c4c4c4;box-sizing:border-box;"></div>
<div id="e_sql" style="position:absolute;left:793.20px;top:146.19px;font-size:13.2px;line-height:13.2px;color:#555;font-weight:normal;letter-spacing:-0.300px;white-space:nowrap;transform:scaleX(0.9998);transform-origin:0 0;">DigaSQL search</div>
<div style="position:absolute;left:550px;top:176px;width:500px;height:222px;background:#ffffff;"></div>
<div style="position:absolute;left:560px;top:225px;width:490px;height:1px;background:#cfcfcf;"></div>
<div style="position:absolute;left:619px;top:184px;width:1px;height:41px;background:#cfcfcf;"></div>
<div style="position:absolute;left:570px;top:197.1px;font-size:15.4px;line-height:15.4px;font-weight:bold;white-space:nowrap;background:linear-gradient(90deg,#6a6a6a 0px,#7a7a7a 10px,#a8a8a8 17px,#dedede 25px);-webkit-background-clip:text;background-clip:text;color:transparent;letter-spacing:-0.6px">Ref</div>
<svg style="position:absolute;left:594px;top:202px;" width="12" height="8" viewBox="594 202 12 8"><path d="M595,203 H604.5 L599.75,208.3 Z" fill="#4a4a4a"/></svg>
<div id="e_th_title" style="position:absolute;left:631.30px;top:197.06px;font-size:15.4px;line-height:15.4px;color:#454545;font-weight:bold;letter-spacing:-0.300px;white-space:nowrap;transform:scaleX(0.9935);transform-origin:0 0;">Title</div>
<div style="position:absolute;left:560px;top:252px;width:490px;height:1px;background:#d3d3d3;"></div>
<div id="er_0" style="position:absolute;left:570.60px;top:231.76px;font-size:15.4px;line-height:15.4px;color:#1a1a1a;font-weight:normal;letter-spacing:0.000px;white-space:nowrap;">10</div>
<div id="et_0" style="position:absolute;left:629.60px;top:231.76px;font-size:15.4px;line-height:15.4px;color:#137012;font-weight:normal;letter-spacing:-0.300px;white-space:nowrap;transform:scaleX(0.9642);transform-origin:0 0;">EndPoint Story of HSC at computer LAPTOP-HSC</div>
<div style="position:absolute;left:560px;top:279px;width:490px;height:1px;background:#d3d3d3;"></div>
<div id="er_1" style="position:absolute;left:571.60px;top:258.76px;font-size:15.4px;line-height:15.4px;color:#1a1a1a;font-weight:normal;letter-spacing:0.000px;white-space:nowrap;">7</div>
<div id="et_1" style="position:absolute;left:630.60px;top:258.76px;font-size:15.4px;line-height:15.4px;color:#137012;font-weight:normal;letter-spacing:-0.300px;white-space:nowrap;transform:scaleX(0.9948);transform-origin:0 0;">A new story</div>
<div style="position:absolute;left:560px;top:306px;width:490px;height:1px;background:#d3d3d3;"></div>
<div id="er_2" style="position:absolute;left:571.60px;top:285.76px;font-size:15.4px;line-height:15.4px;color:#1a1a1a;font-weight:normal;letter-spacing:0.000px;white-space:nowrap;">6</div>
<div id="et_2" style="position:absolute;left:630.60px;top:285.76px;font-size:15.4px;line-height:15.4px;color:#0c0c82;font-weight:normal;letter-spacing:-0.300px;white-space:nowrap;transform:scaleX(0.9910);transform-origin:0 0;">Text entry of HSC at computer LAPTOP-HSC</div>
<div style="position:absolute;left:560px;top:333px;width:490px;height:1px;background:#d3d3d3;"></div>
<div id="er_3" style="position:absolute;left:571.60px;top:312.76px;font-size:15.4px;line-height:15.4px;color:#1a1a1a;font-weight:normal;letter-spacing:0.000px;white-space:nowrap;">5</div>
<div id="et_3" style="position:absolute;left:630.60px;top:312.76px;font-size:15.4px;line-height:15.4px;color:#0c0c82;font-weight:normal;letter-spacing:-0.300px;white-space:nowrap;transform:scaleX(0.9910);transform-origin:0 0;">Text entry of HSC at computer LAPTOP-HSC</div>
<div style="position:absolute;left:550px;top:398px;width:500px;height:21px;background:#e3e3e3;"></div>
<div style="position:absolute;left:550px;top:398px;width:21px;height:21px;background:#e6e6e6;"></div>
<div style="position:absolute;left:1029px;top:398px;width:21px;height:21px;background:#e6e6e6;"></div>
<div style="position:absolute;left:571px;top:400px;width:103px;height:17px;background:#b5b5b5;"></div>
<svg style="position:absolute;left:550px;top:398px;" width="500" height="21" viewBox="550 398 500 21"><path d="M564,402 V414.5 L557,408.2 Z M1036,402 V414.5 L1043,408.2 Z" fill="#c2c2c2"/></svg>
<div style="position:absolute;left:550px;top:419px;width:500px;height:5px;background:#c3c3c3;"></div>
<div style="position:absolute;left:550px;top:424px;width:500px;height:44px;background:#f3f2f0;"></div>
<div style="position:absolute;left:550px;top:468px;width:500px;height:1px;background:#cfcfcf;"></div>
<div id="mts_hdr" style="position:absolute;left:572.80px;top:441.19px;font-size:13.2px;line-height:13.2px;color:#222;font-weight:normal;letter-spacing:-0.300px;white-space:nowrap;transform:scaleX(0.9590);transform-origin:0 0;">MULTI TABLE SEARCH (found: 101)</div>
<svg style="position:absolute;left:1018px;top:436px;" width="20" height="20" viewBox="1018 436 20 20"><path d="M1021.5,439.3 L1035,452.3 M1035,439.3 L1021.5,452.3" stroke="#222" stroke-width="1.4"/></svg>
<div style="position:absolute;left:550px;top:469px;width:479px;height:162px;background:#ffffff;"></div>
<div style="position:absolute;left:560px;top:518px;width:469px;height:1px;background:#cfcfcf;"></div>
<div style="position:absolute;left:709px;top:477px;width:1px;height:41px;background:#cfcfcf;"></div>
<div style="position:absolute;left:769px;top:477px;width:1px;height:41px;background:#cfcfcf;"></div>
<div id="mh_0" style="position:absolute;left:571.40px;top:489.86px;font-size:15.4px;line-height:15.4px;color:#454545;font-weight:bold;letter-spacing:-0.049px;white-space:nowrap;">Table</div>
<div id="mh_1" style="position:absolute;left:719.80px;top:489.86px;font-size:15.4px;line-height:15.4px;color:#454545;font-weight:bold;letter-spacing:0.030px;white-space:nowrap;">Refere</div>
<div id="mh_2" style="position:absolute;left:780.70px;top:489.86px;font-size:15.4px;line-height:15.4px;color:#454545;font-weight:bold;letter-spacing:-0.300px;white-space:nowrap;transform:scaleX(0.9935);transform-origin:0 0;">Title</div>
<div style="position:absolute;left:560px;top:545px;width:469px;height:1px;background:#d3d3d3;"></div>
<div id="mt_0" style="position:absolute;left:571.90px;top:525.83px;font-size:15.2px;line-height:15.2px;color:#1a1a1a;font-weight:normal;letter-spacing:-0.212px;white-space:nowrap;">TestData</div>
<div id="mr_0" style="position:absolute;left:721.20px;top:525.83px;font-size:15.2px;line-height:15.2px;color:#1a1a1a;font-weight:normal;letter-spacing:-0.300px;white-space:nowrap;transform:scaleX(0.9468);transform-origin:0 0;">237</div>
<div id="mtt_0" style="position:absolute;left:780.60px;top:525.83px;font-size:15.2px;line-height:15.2px;color:#0e0e7c;font-weight:normal;letter-spacing:-0.300px;white-space:nowrap;transform:scaleX(0.9934);transform-origin:0 0;">test</div>
<div style="position:absolute;left:560px;top:572px;width:469px;height:1px;background:#d3d3d3;"></div>
<div id="mt_1" style="position:absolute;left:571.90px;top:552.83px;font-size:15.2px;line-height:15.2px;color:#1a1a1a;font-weight:normal;letter-spacing:-0.212px;white-space:nowrap;">TestData</div>
<div id="mr_1" style="position:absolute;left:721.20px;top:552.83px;font-size:15.2px;line-height:15.2px;color:#1a1a1a;font-weight:normal;letter-spacing:-0.300px;white-space:nowrap;transform:scaleX(0.9468);transform-origin:0 0;">236</div>
<div id="mtt_1" style="position:absolute;left:780.60px;top:552.83px;font-size:15.2px;line-height:15.2px;color:#1f55a8;font-weight:normal;letter-spacing:0.112px;white-space:nowrap;">Testdata for marker export 2</div>
<div style="position:absolute;left:560px;top:599px;width:469px;height:1px;background:#d3d3d3;"></div>
<div id="mt_2" style="position:absolute;left:571.90px;top:579.83px;font-size:15.2px;line-height:15.2px;color:#1a1a1a;font-weight:normal;letter-spacing:-0.212px;white-space:nowrap;">TestData</div>
<div id="mr_2" style="position:absolute;left:721.20px;top:579.83px;font-size:15.2px;line-height:15.2px;color:#1a1a1a;font-weight:normal;letter-spacing:-0.300px;white-space:nowrap;transform:scaleX(0.9468);transform-origin:0 0;">235</div>
<div id="mtt_2" style="position:absolute;left:780.60px;top:579.83px;font-size:15.2px;line-height:15.2px;color:#1f55a8;font-weight:normal;letter-spacing:0.042px;white-space:nowrap;">Testdata for marker export</div>
<div style="position:absolute;left:560px;top:626px;width:469px;height:1px;background:#d3d3d3;"></div>
<div id="mt_3" style="position:absolute;left:571.90px;top:606.83px;font-size:15.2px;line-height:15.2px;color:#1a1a1a;font-weight:normal;letter-spacing:-0.212px;white-space:nowrap;">TestData</div>
<div id="mr_3" style="position:absolute;left:721.20px;top:606.83px;font-size:15.2px;line-height:15.2px;color:#1a1a1a;font-weight:normal;letter-spacing:-0.300px;white-space:nowrap;transform:scaleX(0.9468);transform-origin:0 0;">227</div>
<div id="mtt_3" style="position:absolute;left:780.60px;top:606.83px;font-size:15.2px;line-height:15.2px;color:#0e0e7c;font-weight:normal;letter-spacing:-0.300px;white-space:nowrap;transform:scaleX(0.9930);transform-origin:0 0;">Java Jive €,ƒ„ a</div>
<div style="position:absolute;left:1029px;top:469px;width:21px;height:162px;background:#e3e3e3;"></div>
<div style="position:absolute;left:1029px;top:469px;width:21px;height:21px;background:#e6e6e6;"></div>
<svg style="position:absolute;left:1029px;top:469px;" width="21" height="162" viewBox="1029 469 21 162"><path d="M1033.2,483 H1046.9 L1040,475.6 Z M1033.2,617 H1046.9 L1040,624 Z" fill="#c2c2c2"/></svg>
<div style="position:absolute;left:1031px;top:490px;width:17px;height:21px;background:#b5b5b5;"></div>
<div style="position:absolute;left:550px;top:631px;width:500px;height:21px;background:#e3e3e3;"></div>
<div style="position:absolute;left:571px;top:633px;width:87px;height:17px;background:#b5b5b5;"></div>
<svg style="position:absolute;left:550px;top:631px;" width="500" height="21" viewBox="550 631 500 21"><path d="M564,635 V648.8 L557,641.9 Z M1015,635 V648.8 L1022.2,641.9 Z" fill="#c2c2c2"/></svg>
<div style="position:absolute;left:0px;top:652px;width:1051px;height:55px;background:#f3f2f0;"></div>
<svg style="position:absolute;left:15px;top:668px;" width="55" height="24" viewBox="15 668 55 24"><path d="M29,673.4 V686.2 L21.4,679.8 Z" fill="#c4c4c4"/><path d="M57,673.4 V686.2 L64.2,679.8 Z" fill="#3e3e3e"/></svg>
<div style="position:absolute;left:86px;top:662px;width:150px;height:33px;background:#72acdc;border:1px solid #5b9bd5;box-sizing:border-box;"></div>
<div style="position:absolute;left:85px;top:673px;width:150px;text-align:center;font-size:13px;line-height:13px;color:#222">0</div>
<div style="position:absolute;left:246px;top:662px;width:150px;height:33px;background:#72acdc;border:1px solid #5b9bd5;box-sizing:border-box;"></div>
<div style="position:absolute;left:245px;top:673px;width:150px;text-align:center;font-size:13px;line-height:13px;color:#222">1</div>
<div style="position:absolute;left:406px;top:662px;width:150px;height:33px;background:#72acdc;border:1px solid #5b9bd5;box-sizing:border-box;"></div>
<div style="position:absolute;left:405px;top:673px;width:150px;text-align:center;font-size:13px;line-height:13px;color:#222">2</div>
<div style="position:absolute;left:566px;top:662px;width:150px;height:33px;background:#72acdc;border:1px solid #5b9bd5;box-sizing:border-box;"></div>
<div style="position:absolute;left:565px;top:673px;width:150px;text-align:center;font-size:13px;line-height:13px;color:#222">3</div>
<div style="position:absolute;left:726px;top:662px;width:150px;height:33px;background:#72acdc;border:1px solid #5b9bd5;box-sizing:border-box;"></div>
<div style="position:absolute;left:725px;top:673px;width:150px;text-align:center;font-size:13px;line-height:13px;color:#222">4</div>
<div style="position:absolute;left:886px;top:662px;width:150px;height:33px;background:#72acdc;border:1px solid #5b9bd5;box-sizing:border-box;"></div>
<div style="position:absolute;left:885px;top:673px;width:150px;text-align:center;font-size:13px;line-height:13px;color:#222">5</div>
<div style="position:absolute;left:0px;top:707px;width:1051px;height:30px;background:#e4e4e4;"></div>
<div id="st_0" style="position:absolute;left:7.70px;top:716.30px;font-size:12.7px;line-height:12.7px;color:#1a1a1a;font-weight:normal;letter-spacing:-0.300px;white-space:nowrap;transform:scaleX(0.9817);transform-origin:0 0;">User: HSC</div>
<div id="st_1" style="position:absolute;left:135.50px;top:716.30px;font-size:12.7px;line-height:12.7px;color:#1a1a1a;font-weight:normal;letter-spacing:-0.300px;white-space:nowrap;transform:scaleX(0.9890);transform-origin:0 0;">DB: LocalHSc</div>
<div id="st_2" style="position:absolute;left:274.80px;top:716.30px;font-size:12.7px;line-height:12.7px;color:#1a1a1a;font-weight:normal;letter-spacing:-0.089px;white-space:nowrap;">Table: StoryConnectHSc</div>
<div id="st_3" style="position:absolute;left:439.70px;top:716.30px;font-size:12.7px;line-height:12.7px;color:#1a1a1a;font-weight:normal;letter-spacing:0.047px;white-space:nowrap;">4 Entries</div>
<div id="st_4" style="position:absolute;left:529.90px;top:716.30px;font-size:12.7px;line-height:12.7px;color:#1a1a1a;font-weight:normal;letter-spacing:0.367px;white-space:nowrap;">No selection</div>
<div id="st_5" style="position:absolute;left:632.00px;top:716.30px;font-size:12.7px;line-height:12.7px;color:#1a1a1a;font-weight:normal;letter-spacing:0.359px;white-space:nowrap;">All</div>
<svg style="position:absolute;left:1036px;top:722px;" width="14" height="14" viewBox="1036 722 14 14"><g fill="#5a6a8a"><rect x="1045" y="724" width="1.5" height="1.5"/><rect x="1042" y="727" width="1.5" height="1.5"/><rect x="1045" y="727" width="1.5" height="1.5"/><rect x="1039" y="730" width="1.5" height="1.5"/><rect x="1042" y="730" width="1.5" height="1.5"/><rect x="1045" y="730" width="1.5" height="1.5"/></g></svg>
<div style="position:absolute;left:0;top:0;width:1051px;height:737px;box-sizing:border-box;border:1px solid #9c9c9c;border-radius:9px;"></div>
<div style="position:absolute;left:11.8px;top:135.6px;width:540.6px;height:259.4px;border-radius:6.5px;box-shadow:inset 0 0 7px 1px rgba(0,0,0,0.22), 0 0 8px 1px rgba(0,0,0,0.18);"></div>
<svg style="position:absolute;left:0;top:0" width="1051" height="737"><rect x="11.8" y="135.6" width="540.6" height="259.4" rx="6.5" ry="6.5" fill="none" stroke="#f50a0a" stroke-width="2.5"/></svg>
</div></body></html>
